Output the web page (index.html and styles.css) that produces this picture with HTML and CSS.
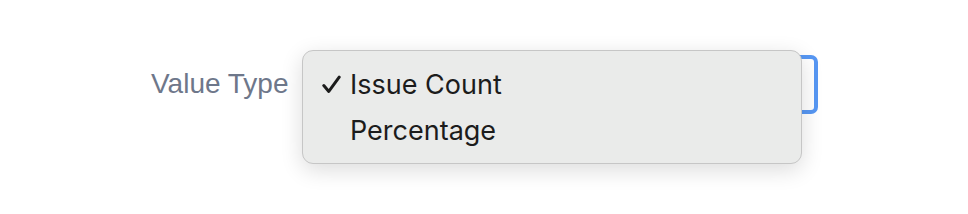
FILE: index.html
```html
<!DOCTYPE html>
<html lang="en">
<head>
    <meta charset="UTF-8">
    <meta name="viewport" content="width=device-width, initial-scale=1.0">
    <title>Value Type</title>
    <link rel="stylesheet" href="styles.css">
</head>
<body>
    <div class="field">
        <label class="field-label" for="valueType">Value Type</label>
        <div class="control">
            <div class="select" id="valueType"></div>
            <!-- menu abierto encima del select -->
            <ul class="menu">
                <li class="menu-item selected">
                    <span class="check">
                        <svg width="19" height="19" viewBox="0 0 19 19"><path d="M1.8 10.6 L6.8 16.4 L17.2 2.2" fill="none" stroke="#1c1c1c" stroke-width="3" stroke-linecap="round" stroke-linejoin="round"/></svg>
                    </span>Issue Count
                </li>
                <li class="menu-item"><span class="check"></span>Percentage</li>
            </ul>
        </div>
    </div>
</body>
</html>
```

FILE: styles.css
```css
body {
    margin: 0;
    min-height: 214px;
    background-color: #fff;
    font-family: "Liberation Sans", Arial, sans-serif;
}

.field {
    display: flex;
    align-items: center;
    padding: 55px 0 100px 151px;
}

.field-label {
    font-size: 28px;
    color: #6e778a;
    width: 155px;
    margin-top: -2px;
}

.control {
    position: relative;
}

.select {
    width: 504px;
    height: 51px;
    border: 4px solid #5797f3;
    border-radius: 7px;
    background-color: #fff;
}

.menu {
    position: absolute;
    left: -4px;
    top: -5px;
    width: 498px;
    margin: 0;
    padding: 10px 0 10px;
    list-style-type: none;
    background-color: #eaebea;
    border: 1px solid #c6c6c6;
    border-radius: 11px;
    box-shadow: 0 6px 22px rgba(0, 0, 0, 0.14);
    font-family: Inter, "Noto Sans", sans-serif;
}

.menu-item {
    display: flex;
    align-items: center;
    height: 46px;
    font-size: 27px;
    color: #1c1c1c;
}

.check {
    display: flex;
    align-items: center;
    width: 28px;
    margin-left: 19px;
    margin-top: 1px;
}
```
